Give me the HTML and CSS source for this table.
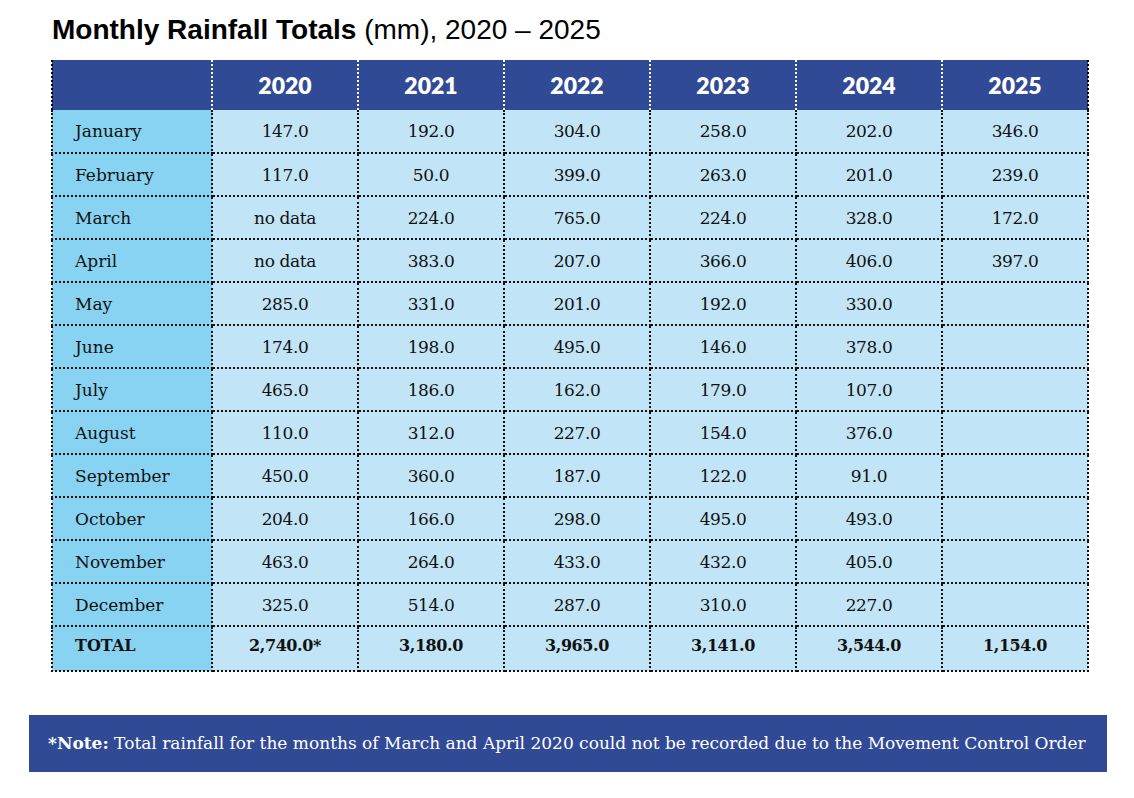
FILE: index.html
```html
<!DOCTYPE html>
<html lang="en">
<head>
<meta charset="utf-8">
<title>Monthly Rainfall Totals</title>
<link rel="stylesheet" href="styles.css">
</head>
<body>
<div class="page">
  <h1 class="title"><strong>Monthly Rainfall Totals</strong> (mm), 2020 – 2025</h1>
  <table class="rain">
    <colgroup>
      <col class="c-month"><col class="c-year"><col class="c-year"><col class="c-year"><col class="c-year"><col class="c-year"><col class="c-year">
    </colgroup>
    <thead>
      <tr><th class="blank"></th><th>2020</th><th>2021</th><th>2022</th><th>2023</th><th>2024</th><th>2025</th></tr>
    </thead>
    <tbody>
      <tr><td class="m">January</td><td>147.0</td><td>192.0</td><td>304.0</td><td>258.0</td><td>202.0</td><td>346.0</td></tr>
      <tr><td class="m">February</td><td>117.0</td><td>50.0</td><td>399.0</td><td>263.0</td><td>201.0</td><td>239.0</td></tr>
      <tr><td class="m">March</td><td>no data</td><td>224.0</td><td>765.0</td><td>224.0</td><td>328.0</td><td>172.0</td></tr>
      <tr><td class="m">April</td><td>no data</td><td>383.0</td><td>207.0</td><td>366.0</td><td>406.0</td><td>397.0</td></tr>
      <tr><td class="m">May</td><td>285.0</td><td>331.0</td><td>201.0</td><td>192.0</td><td>330.0</td><td></td></tr>
      <tr><td class="m">June</td><td>174.0</td><td>198.0</td><td>495.0</td><td>146.0</td><td>378.0</td><td></td></tr>
      <tr><td class="m">July</td><td>465.0</td><td>186.0</td><td>162.0</td><td>179.0</td><td>107.0</td><td></td></tr>
      <tr><td class="m">August</td><td>110.0</td><td>312.0</td><td>227.0</td><td>154.0</td><td>376.0</td><td></td></tr>
      <tr><td class="m">September</td><td>450.0</td><td>360.0</td><td>187.0</td><td>122.0</td><td>91.0</td><td></td></tr>
      <tr><td class="m">October</td><td>204.0</td><td>166.0</td><td>298.0</td><td>495.0</td><td>493.0</td><td></td></tr>
      <tr><td class="m">November</td><td>463.0</td><td>264.0</td><td>433.0</td><td>432.0</td><td>405.0</td><td></td></tr>
      <tr><td class="m">December</td><td>325.0</td><td>514.0</td><td>287.0</td><td>310.0</td><td>227.0</td><td></td></tr>
      <tr class="total"><td class="m">TOTAL</td><td>2,740.0*</td><td>3,180.0</td><td>3,965.0</td><td>3,141.0</td><td>3,544.0</td><td>1,154.0</td></tr>
    </tbody>
  </table>
  <p class="note"><strong>*Note:</strong> Total rainfall for the months of March and April 2020 could not be recorded due to the Movement Control Order</p>
</div>
</body>
</html>
```
FILE: styles.css
```css
html, body {
  margin: 0;
  padding: 0;
  background: #ffffff;
}

.page {
  padding-top: 15px;
}

.title {
  margin: 0 0 15px 52px;
  height: 30px;
  font-family: "Liberation Sans", Arial, sans-serif;
  font-size: 28px;
  line-height: 30px;
  font-weight: 400;
  color: #000;
}

.title strong {
  font-weight: 700;
}

.rain {
  margin-left: 51px;
  border-collapse: collapse;
  table-layout: fixed;
  width: 1037px;
  font-family: "DejaVu Serif", serif;
  font-size: 17px;
  color: #111;
}

.c-month { width: 160px; }
.c-year { width: 146px; }

.rain th {
  height: 50px;
  padding: 0;
  background: #314a96;
  color: #fff;
  font-family: Lato, "Open Sans", sans-serif;
  font-weight: 800;
  font-size: 23px;
  text-align: center;
  border-left: 2px dotted #fff;
  border-right: 2px dotted #fff;
  border-top: none;
  border-bottom: none;
}

.rain th.blank {
  border-left: 2px dotted #000;
}

.rain th:last-child {
  border-right: 2px dotted #000;
}

.rain td {
  height: 43px;
  padding: 0;
  box-sizing: border-box;
  background: #c1e5f6;
  text-align: center;
  border: 2px dotted #111;
  letter-spacing: -0.4px;
}

.rain td.m {
  background: #88d3f1;
  text-align: left;
  padding-left: 22px;
  letter-spacing: 0;
}

.rain tbody tr:first-child td {
  border-top: none;
}

.rain .total td {
  height: 45px;
  font-weight: 700;
  font-size: 16px;
  padding-bottom: 6px;
}

.note {
  margin: 43px 0 0 29px;
  width: 1078px;
  height: 57px;
  box-sizing: border-box;
  padding-left: 19px;
  background: #314a96;
  color: #fff;
  font-family: "DejaVu Serif", serif;
  font-size: 17px;
  line-height: 57px;
  white-space: nowrap;
}

.note strong {
  font-weight: 700;
}
```
